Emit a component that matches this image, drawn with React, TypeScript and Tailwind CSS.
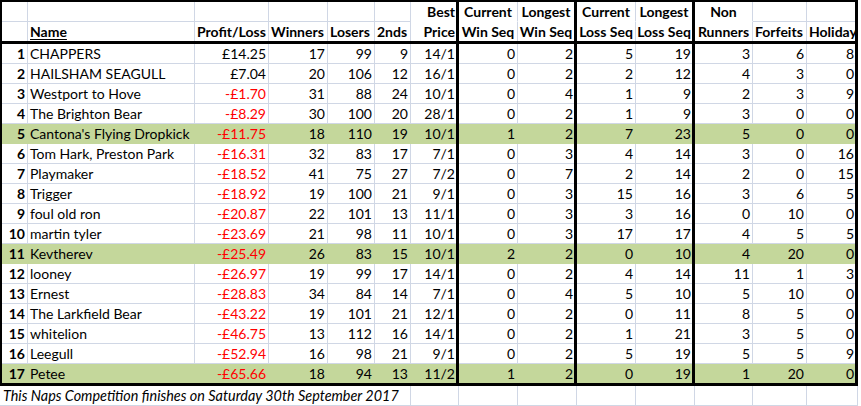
import React from "react";

type Align = "l" | "r" | "c";

const W = [
  "w-[26px]",
  "w-[167px]",
  "w-[74px]",
  "w-[59px]",
  "w-[47px]",
  "w-[36px]",
  "w-[45px]",
  "w-[59px]",
  "w-[56px]",
  "w-[59px]",
  "w-[56px]",
  "w-[58px]",
  "w-[54px]",
  "w-[48px]",
];
const THICK = [false, false, false, false, false, false, true, false, true, false, true, false, false, true];

type Row = [number, string, string, number, number, number, string, number, number, number, number, number, number, number];

const rows: Row[] = [
  [1, "CHAPPERS", "£14.25", 17, 99, 9, "14/1", 0, 2, 5, 19, 3, 6, 8],
  [2, "HAILSHAM SEAGULL", "£7.04", 20, 106, 12, "16/1", 0, 2, 2, 12, 4, 3, 0],
  [3, "Westport to Hove", "-£1.70", 31, 88, 24, "10/1", 0, 4, 1, 9, 2, 3, 9],
  [4, "The Brighton Bear", "-£8.29", 30, 100, 20, "28/1", 0, 2, 1, 9, 3, 0, 0],
  [5, "Cantona's Flying Dropkick", "-£11.75", 18, 110, 19, "10/1", 1, 2, 7, 23, 5, 0, 0],
  [6, "Tom Hark, Preston Park", "-£16.31", 32, 83, 17, "7/1", 0, 3, 4, 14, 3, 0, 16],
  [7, "Playmaker", "-£18.52", 41, 75, 27, "7/2", 0, 7, 2, 14, 2, 0, 15],
  [8, "Trigger", "-£18.92", 19, 100, 21, "9/1", 0, 3, 15, 16, 3, 6, 5],
  [9, "foul old ron", "-£20.87", 22, 101, 13, "11/1", 0, 3, 3, 16, 0, 10, 0],
  [10, "martin tyler", "-£23.69", 21, 98, 11, "10/1", 0, 3, 17, 17, 4, 5, 5],
  [11, "Kevtherev", "-£25.49", 26, 83, 15, "10/1", 2, 2, 0, 10, 4, 20, 0],
  [12, "looney", "-£26.97", 19, 99, 17, "14/1", 0, 2, 4, 14, 11, 1, 3],
  [13, "Ernest", "-£28.83", 34, 84, 14, "7/1", 0, 4, 5, 10, 5, 10, 0],
  [14, "The Larkfield Bear", "-£43.22", 19, 101, 21, "12/1", 0, 2, 0, 11, 8, 5, 0],
  [15, "whitelion", "-£46.75", 13, 112, 16, "14/1", 0, 2, 1, 21, 3, 5, 0],
  [16, "Leegull", "-£52.94", 16, 98, 21, "9/1", 0, 2, 5, 19, 5, 5, 9],
  [17, "Petee", "-£65.66", 18, 94, 13, "11/2", 1, 2, 0, 19, 1, 20, 0],
];

const GREEN = new Set([5, 11, 17]);

function Cell({
  i,
  children,
  align = "r",
  bottom = true,
  bottomLine = true,
  green = false,
  className = "",
}: {
  i: number;
  children?: React.ReactNode;
  align?: Align;
  bottom?: boolean;
  bottomLine?: boolean;
  green?: boolean;
  className?: string;
}) {
  const thick = THICK[i];
  const cls = [
    "shrink-0 flex items-end whitespace-nowrap leading-[19px] overflow-visible",
    W[i],
    thick ? "" : "border-r",
    thick ? "" : green ? "border-r-transparent" : "border-r-[#d0d7e5]",
    bottom ? "border-b" : "",
    bottom ? (green || !bottomLine ? "border-b-transparent" : "border-b-[#d0d7e5]") : "",
    align === "r"
      ? thick
        ? "justify-end pr-[1px]"
        : "justify-end pr-[2px]"
      : align === "c"
      ? "justify-center"
      : "justify-start pl-[2px]",
    className,
  ].join(" ");
  return <div className={cls}>{children}</div>;
}

function Divider() {
  return <div className="w-[3px] shrink-0 bg-black" />;
}

function RowCells({
  cells,
  green = false,
  bottom = true,
}: {
  cells: { c?: React.ReactNode; a?: Align; line?: boolean; cls?: string }[];
  green?: boolean;
  bottom?: boolean;
}) {
  const out: React.ReactNode[] = [];
  cells.forEach((cell, i) => {
    out.push(
      <Cell
        key={i}
        i={i}
        align={cell.a}
        green={green}
        bottom={bottom}
        bottomLine={cell.line !== false}
        className={cell.cls}
      >
        {cell.c}
      </Cell>
    );
    if (THICK[i]) out.push(<Divider key={"d" + i} />);
  });
  return <>{out}</>;
}

export default function App() {
  const head1 = [
    {},
    {},
    {},
    {},
    {},
    {},
    { c: "Best", a: "r" as Align, line: false },
    { c: "Current", a: "c" as Align, line: false },
    { c: "Longest", a: "c" as Align, line: false },
    { c: "Current", a: "c" as Align, line: false },
    { c: "Longest", a: "c" as Align, line: false },
    { c: "Non", a: "c" as Align, line: false },
    {},
    {},
  ];
  const head2 = [
    {},
    { c: <span className="underline decoration-1 underline-offset-[2px]">Name</span>, a: "l" as Align },
    { c: "Profit/Loss", a: "l" as Align },
    { c: "Winners", a: "l" as Align },
    { c: "Losers", a: "l" as Align },
    { c: "2nds", a: "l" as Align },
    { c: "Price", a: "r" as Align },
    { c: "Win Seq", a: "c" as Align },
    { c: "Win Seq", a: "c" as Align },
    { c: "Loss Seq", a: "c" as Align },
    { c: "Loss Seq", a: "c" as Align },
    { c: "Runners", a: "c" as Align },
    { c: "Forfeits", a: "l" as Align },
    { c: "Holiday", a: "l" as Align },
  ];

  return (
    <div className="w-[861px] h-[406px] bg-white text-black text-[14px] overflow-hidden [font-family:Lato,'Liberation_Sans',sans-serif]">
      <div className="w-[858px] border-l-2 border-t-2 border-black">
        <div className="flex h-[20px] font-bold">
          <RowCells cells={head1} />
        </div>
        <div className="flex h-[22px] border-b-[3px] border-black font-bold">
          <RowCells cells={head2} bottom={false} />
        </div>
        {rows.map((r) => {
          const green = GREEN.has(r[0]);
          const last = r[0] === 17;
          const pl = r[2].startsWith("-");
          const cells = [
            { c: r[0], a: "r" as Align, cls: "font-bold pr-[1px]" },
            { c: r[1], a: "l" as Align },
            { c: r[2], a: "r" as Align, cls: pl ? "text-[#ff0000]" : "" },
            ...r.slice(3).map((v) => ({ c: v, a: "r" as Align })),
          ];
          return (
            <div
              key={r[0]}
              className={[
                "flex",
                last ? "h-[22px] border-b-[3px] border-black" : "h-[20px]",
                green ? "bg-[#c4d79b]" : "",
              ].join(" ")}
            >
              <RowCells cells={cells} green={green} bottom={!last} />
            </div>
          );
        })}
      </div>
      <div className="flex h-[20px] w-[858px]">
        <div className="w-[411px] shrink-0 border-r border-b border-[#d0d7e5] flex items-end pl-[3px] leading-[19px] text-[14.4px] italic whitespace-nowrap">
          This Naps Competition finishes on Saturday 30th September 2017
        </div>
        <div className="w-[48px] shrink-0 border-r border-b border-[#d0d7e5]" />
        <div className="w-[59px] shrink-0 border-r border-b border-[#d0d7e5]" />
        <div className="w-[59px] shrink-0 border-r border-b border-[#d0d7e5]" />
        <div className="w-[59px] shrink-0 border-r border-b border-[#d0d7e5]" />
        <div className="w-[59px] shrink-0 border-r border-b border-[#d0d7e5]" />
        <div className="w-[58px] shrink-0 border-r border-b border-[#d0d7e5]" />
        <div className="w-[54px] shrink-0 border-r border-b border-[#d0d7e5]" />
        <div className="w-[51px] shrink-0 border-r border-b border-[#d0d7e5]" />
      </div>
    </div>
  );
}
